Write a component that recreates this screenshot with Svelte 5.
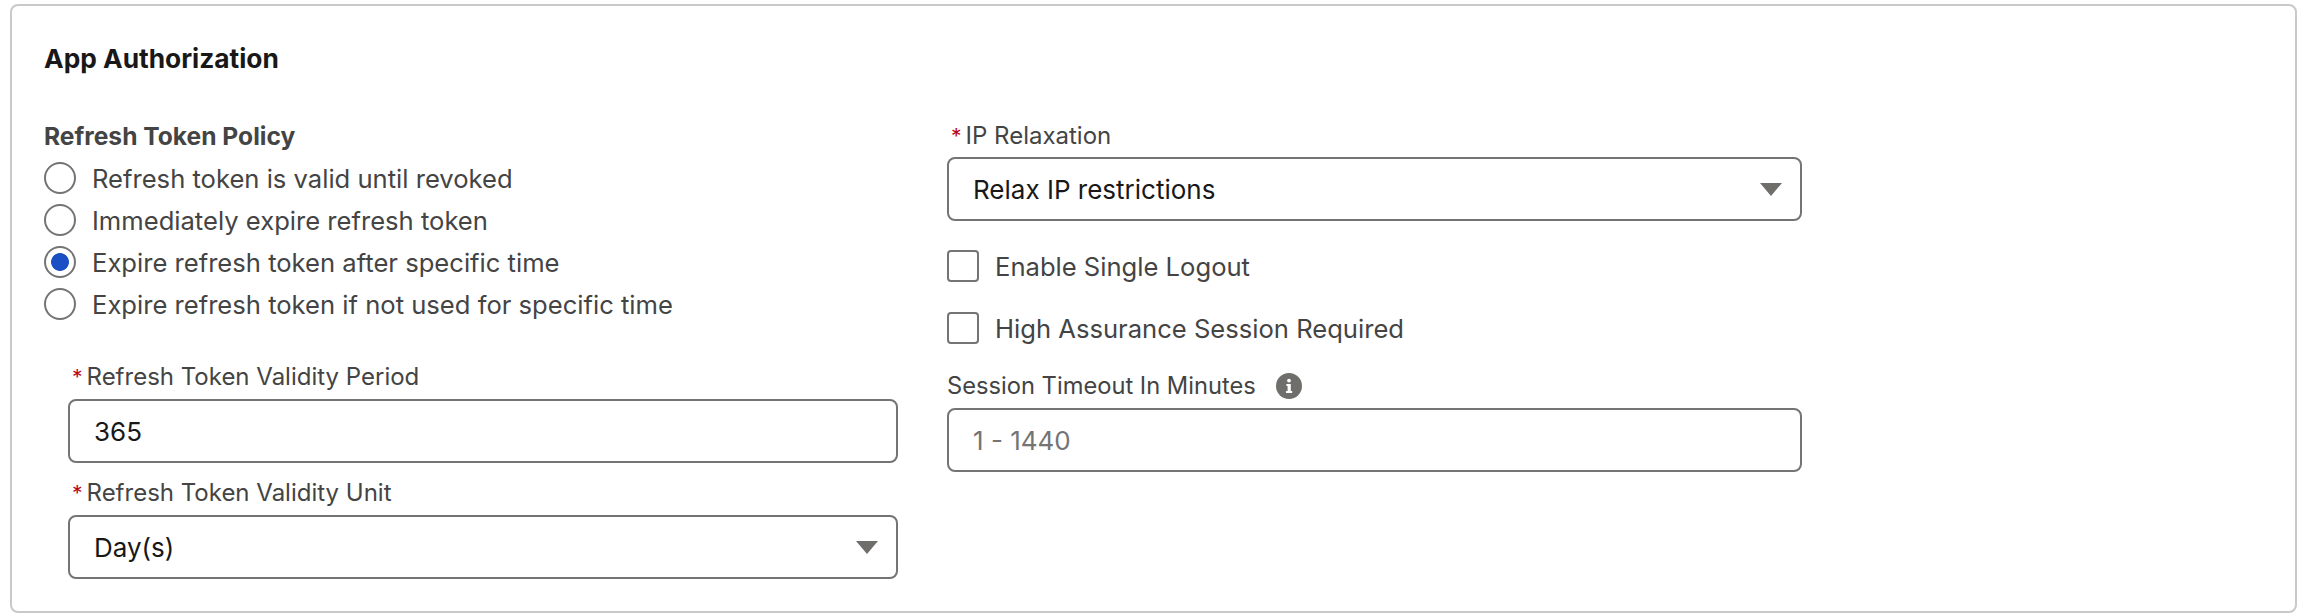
<script>
  const policies = [
    { label: "Refresh token is valid until revoked", checked: false },
    { label: "Immediately expire refresh token", checked: false },
    { label: "Expire refresh token after specific time", checked: true },
    { label: "Expire refresh token if not used for specific time", checked: false }
  ];
</script>

<div class="page">
  <section class="card">
    <h2>App Authorization</h2>
    <div class="columns">
      <div class="col">
        <div class="group-label">Refresh Token Policy</div>
        <div class="radios">
          {#each policies as policy}
            <label class="radio">
              <input type="radio" name="policy" checked={policy.checked} />
              <span>{policy.label}</span>
            </label>
          {/each}
        </div>

        <div class="nested">
          <div class="field-label"><abbr>*</abbr>Refresh Token Validity Period</div>
          <input class="control" type="text" value="365" />
          <div class="field-label second"><abbr>*</abbr>Refresh Token Validity Unit</div>
          <div class="select-wrap">
            <select class="control">
              <option>Day(s)</option>
            </select>
            <svg class="caret" viewBox="0 0 22 13"><path d="M0 0h22L11 13z" /></svg>
          </div>
        </div>
      </div>

      <div class="col">
        <div class="field-label ip"><abbr>*</abbr>IP Relaxation</div>
        <div class="select-wrap">
          <select class="control">
            <option>Relax IP restrictions</option>
          </select>
          <svg class="caret" viewBox="0 0 22 13"><path d="M0 0h22L11 13z" /></svg>
        </div>

        <div class="checks">
          <label class="check"><input type="checkbox" /><span>Enable Single Logout</span></label>
          <label class="check"><input type="checkbox" /><span>High Assurance Session Required</span></label>
        </div>

        <div class="field-label timeout">
          Session Timeout In Minutes
          <svg class="info" viewBox="0 0 26 26">
            <circle cx="13" cy="13" r="13" fill="#706e6b" />
            <circle cx="13" cy="7.6" r="1.9" fill="#fff" />
            <path d="M10.4 11h4.4v7h1.4v2h-6.2v-2h1.6v-5h-1.2z" fill="#fff" />
          </svg>
        </div>
        <input class="control" type="text" placeholder="1 - 1440" />
      </div>
    </div>
  </section>
</div>

<style>
  :global(body) {
    margin: 0;
    background: #fff;
  }

  .page {
    width: 2308px;
    height: 616px;
    padding: 4px 11px 0 10px;
    box-sizing: border-box;
    font-family: Inter, "Liberation Sans", sans-serif;
    color: #444;
  }

  .card {
    width: 2287px;
    height: 609px;
    box-sizing: border-box;
    border: 2px solid #c9c9c9;
    border-radius: 8px;
    padding: 36px 32px 0;
  }

  h2 {
    margin: 0;
    font-size: 26.3px;
    line-height: 34px;
    font-weight: 700;
    color: #181818;
  }

  .columns {
    display: grid;
    grid-template-columns: 854px 855px;
    column-gap: 49px;
    margin-top: 44px;
  }

  .group-label {
    font-size: 24.6px;
    line-height: 32px;
    font-weight: 700;
    color: #444;
  }

  .radios {
    display: flex;
    flex-direction: column;
    margin-top: 5px;
  }

  .radio {
    display: flex;
    align-items: center;
    gap: 16px;
    height: 42px;
    font-size: 25.6px;
  }

  .radio input {
    appearance: none;
    width: 32px;
    height: 32px;
    margin: 0;
    flex: none;
    border: 2px solid #747474;
    border-radius: 50%;
    background: #fff;
  }

  .radio input:checked {
    background: radial-gradient(circle, #1b4fc4 0 8.5px, #fff 9.3px);
  }

  .nested {
    margin-left: 24px;
    margin-top: 36px;
  }

  .field-label {
    font-size: 24px;
    line-height: 32px;
    color: #444;
    margin-bottom: 6px;
  }

  .field-label abbr {
    color: #ba0517;
    font-size: 21px;
    line-height: 1;
    margin: 0 4px 0 4px;
    text-decoration: none;
  }

  .second {
    margin-top: 14px;
  }

  .ip {
    margin-bottom: 5px;
  }

  .control {
    display: block;
    width: 100%;
    height: 64px;
    box-sizing: border-box;
    border: 2px solid #747474;
    border-radius: 8px;
    padding: 0 24px;
    background: #fff;
    font: inherit;
    font-size: 26px;
    color: #181818;
    appearance: none;
    outline: none;
  }

  .control::placeholder {
    color: #747474;
    opacity: 1;
  }

  .select-wrap {
    position: relative;
  }

  .caret {
    position: absolute;
    right: 20px;
    top: 26px;
    width: 22px;
    height: 13px;
    fill: #706e6b;
  }

  .checks {
    display: flex;
    flex-direction: column;
    gap: 30px;
    margin-top: 29px;
  }

  .check {
    display: flex;
    align-items: center;
    gap: 16px;
    height: 32px;
    font-size: 25.6px;
  }

  .check input {
    appearance: none;
    width: 32px;
    height: 32px;
    margin: 0;
    flex: none;
    border: 2px solid #747474;
    border-radius: 4px;
    background: #fff;
  }

  .timeout {
    display: flex;
    align-items: center;
    gap: 20px;
    margin-top: 26px;
    font-size: 23.7px;
  }

  .info {
    width: 26px;
    height: 26px;
  }
</style>
